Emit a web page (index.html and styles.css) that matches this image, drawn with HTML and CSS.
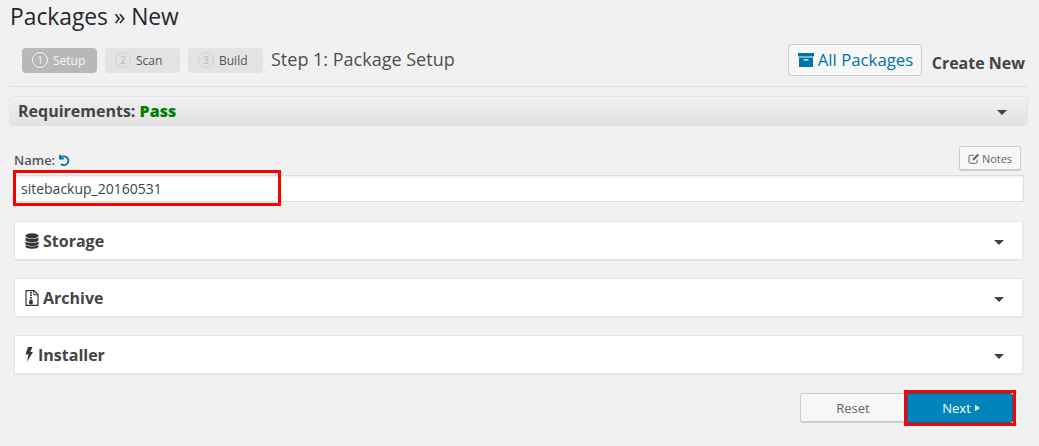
FILE: index.html
```html
<!DOCTYPE html>
<html lang="en">
<head>
<meta charset="utf-8">
<title>Packages » New</title>
<link rel="stylesheet" href="styles.css">
</head>
<body>
<div class="wrap">
  <h1 class="title">Packages » New</h1>
  <div class="toolbar">
    <div class="steps">
      <span class="step active"><span class="num">1</span>Setup</span>
      <span class="step"><span class="num">2</span>Scan</span>
      <span class="step"><span class="num">3</span>Build</span>
      <span class="step-title">Step 1: Package Setup</span>
    </div>
    <div class="actions">
      <a class="all-btn"><svg class="box-icon" viewBox="0 0 16 14"><path d="M0 0h16v3.500H0z"/><path fill-rule="evenodd" d="M1 4.500h14V14H1zM5.500 6.200v1.400h5V6.200z"/></svg>All Packages</a>
      <span class="create">Create New</span>
    </div>
  </div>
  <div class="req">
    <span class="req-text">Requirements: <b class="pass">Pass</b></span>
    <span class="caret"></span>
  </div>
  <div class="name-row">
    <div class="name-label">Name: <svg class="undo" viewBox="0 0 12 12"><path d="M2 .8v3.800h3.800" fill="none"/><path d="M2.300 4.300A4.400 4.400 0 1 1 3 10" fill="none"/></svg></div>
    <button class="notes"><svg class="note-icon" viewBox="0 0 12 11"><path d="M9 6.500v2.600A1.200 1.200 0 0 1 7.800 10.300H2.200A1.200 1.200 0 0 1 1 9.100V3.500a1.200 1.200 0 0 1 1.200-1.200H6" fill="none" stroke="#666" stroke-width="1"/><path d="M4.600 5.800 9.600.8l1.500 1.500-5 5H4.600z" fill="#666"/></svg>Notes</button>
  </div>
  <div class="name-field">
    <input class="name-input" type="text" value="sitebackup_20160531">
    <span class="red name-mark"></span>
  </div>
  <div class="panel">
    <span class="panel-title"><svg class="p-icon" viewBox="0 0 14 16"><ellipse cx="7" cy="2.800" rx="6.500" ry="2.600"/><path d="M.5 4.600c1 1.800 12 1.800 13 0v2.300c0 3-13 3-13 0zM.5 8.400c1 1.800 12 1.800 13 0v2.300c0 3-13 3-13 0zM.5 12.100c1 1.800 12 1.800 13 0v1.300c0 3-13 3-13 0z"/></svg>Storage</span>
    <span class="caret"></span>
  </div>
  <div class="panel">
    <span class="panel-title"><svg class="p-icon" viewBox="0 0 14 16"><path d="M1 .6h8l4 4v10.800H1z" fill="none" stroke="#32373c" stroke-width="1.200"/><path d="M8.800.8v4h4" fill="none" stroke="#32373c"/><path d="M5 2h2v1.500H5zM5 4.500h2V6H5zM5 7h2v1.500H5z"/><path d="M4.800 9.500h2.400l.8 3a2 2 0 1 1-4 0z"/></svg>Archive</span>
    <span class="caret"></span>
  </div>
  <div class="panel">
    <span class="panel-title"><svg class="bolt" viewBox="0 0 8 15"><path d="M3 0h4.500L5.200 5H8L1.800 15l1.800-7.500H.5z"/></svg>Installer</span>
    <span class="caret"></span>
  </div>
  <div class="footer">
    <button class="reset">Reset</button>
    <div class="next-wrap">
      <button class="next">Next<span class="next-arrow"></span></button>
      <span class="red next-mark"></span>
    </div>
  </div>
</div>
</body>
</html>
```
FILE: styles.css
```css
* { box-sizing: border-box; }
html, body { margin: 0; padding: 0; }
body {
  background: #f1f1f1;
  font-family: "Open Sans", sans-serif;
  color: #32373c;
  height: 446px;
  overflow: hidden;
}
.wrap { padding: 0 11px 0 9px; }
.title {
  margin: 0;
  padding: 2px 0 0 1px;
  height: 44px;
  font-size: 22.8px;
  line-height: 29px;
  font-weight: 400;
  color: #23282d;
}
.toolbar {
  height: 43px;
  display: flex;
  justify-content: space-between;
  border-bottom: 1px solid #dfdfdf;
}
.steps {
  display: flex;
  align-items: flex-start;
  padding: 4px 0 0 13px;
  gap: 8px;
}
.step {
  width: 75px;
  height: 25px;
  background: #e3e3e3;
  border-radius: 4px;
  color: #555;
  font-size: 12px;
  display: flex;
  align-items: center;
  padding: 0 0 1px 10px;
  gap: 5px;
}
.step.active { background: #b8b8b8; color: #f6f6f6; }
.num {
  width: 16px;
  height: 16px;
  border: 1px solid #cfcfcf;
  border-radius: 50%;
  font-size: 10px;
  line-height: 14px;
  text-align: center;
  color: #bbb;
}
.step.active .num { border-color: #f4f4f4; color: #f4f4f4; }
.step-title {
  font-size: 18px;
  line-height: 22px;
  color: #4a4f54;
}
.actions { display: flex; align-items: flex-start; }
.all-btn {
  width: 134px;
  height: 32px;
  margin-right: 10px;
  display: flex;
  align-items: center;
  padding: 0 0 2px 9px;
  background: #f7f7f7;
  border: 1px solid #ccc;
  border-radius: 3px;
  color: #0073aa;
  font-size: 16.8px;
}
.box-icon { width: 16px; height: 14px; margin: 2px 4px 0 0; fill: #0073aa; }
.create {
  font-size: 16px;
  font-weight: 700;
  line-height: 22px;
  margin-top: 8px;
  margin-right: 3px;
  color: #444;
}
.req {
  margin-top: 9px;
  height: 30px;
  border: 1px solid #e5e5e5;
  border-radius: 4px;
  background: linear-gradient(#f0f0f0, #e2e2e2);
  display: flex;
  justify-content: space-between;
  align-items: center;
  padding: 0 20px 0 8px;
}
.req-text { font-size: 16px; font-weight: 700; color: #444; }
.pass { color: #008000; }
.caret {
  width: 0;
  height: 0;
  margin-top: 3px;
  border-left: 5px solid transparent;
  border-right: 5px solid transparent;
  border-top: 5px solid #444;
}
.name-row {
  margin: 20px 5px 0;
  height: 26px;
  padding-right: 2px;
  display: flex;
  justify-content: space-between;
  align-items: flex-start;
}
.name-label {
  font-size: 13px;
  font-weight: 600;
  color: #50575e;
  padding-top: 6px;
  line-height: 17px;
  display: flex;
  gap: 3px;
}
.undo {
  width: 12px;
  height: 12px;
  margin-top: 2px;
  stroke: #0073aa;
  stroke-width: 1.800;
}
.notes {
  width: 62px;
  height: 25px;
  margin: 0;
  padding: 0;
  background: #f7f7f7;
  border: 1px solid #ccc;
  border-bottom-width: 2px;
  border-radius: 3px;
  font: 400 11px "Open Sans", sans-serif;
  color: #666;
  display: flex;
  align-items: center;
  justify-content: center;
  gap: 2px;
}
.note-icon { width: 12px; height: 11px; }
.name-field { position: relative; margin: 3px 4px 19px 5px; }
.name-input {
  display: block;
  width: 100%;
  height: 27px;
  margin: 0;
  padding: 0 6px;
  border: 1px solid #ddd;
  background: #fff;
  box-shadow: inset 0 1px 2px rgba(0,0,0,.07);
  font: 400 14px "Open Sans", sans-serif;
  color: #444;
  outline: none;
}
.red { position: absolute; border: 3px solid #f00; pointer-events: none; }
.name-mark { left: -1px; top: -5px; width: 268px; height: 36px; }
.panel {
  margin: 0 5px 18px;
  height: 39px;
  background: #fff;
  border: 1px solid #e5e5e5;
  box-shadow: 0 1px 1px rgba(0,0,0,.04);
  display: flex;
  justify-content: space-between;
  align-items: center;
  padding: 0 18px 0 10px;
}
.panel-title {
  display: flex;
  align-items: center;
  font-size: 16px;
  font-weight: 700;
  color: #444;
}
.p-icon { width: 14px; height: 16px; margin-right: 4px; fill: #32373c; }
.bolt { width: 8px; height: 15px; margin-right: 5px; fill: #32373c; }
.footer {
  margin-top: 19px;
  padding-right: 15px;
  display: flex;
  justify-content: flex-end;
}
.reset {
  width: 106px;
  height: 30px;
  margin: 0 1px 0 0;
  background: #f7f7f7;
  border: 1px solid #ccc;
  border-bottom-width: 2px;
  border-radius: 3px 0 0 3px;
  font: 400 13px "Open Sans", sans-serif;
  color: #666;
}
.next-wrap { position: relative; }
.next {
  width: 106px;
  height: 30px;
  margin: 0;
  padding: 0 0 0 2px;
  background: #0085ba;
  border: 1px solid #006799;
  border-radius: 0 3px 3px 0;
  font: 400 13px "Open Sans", sans-serif;
  color: #fff;
}
.next-arrow {
  display: inline-block;
  margin-left: 4px;
  vertical-align: 2px;
  border-left: 5px solid #fff;
  border-top: 3px solid transparent;
  border-bottom: 3px solid transparent;
}
.next-mark { left: -3px; top: -3px; width: 112px; height: 36px; }
```
